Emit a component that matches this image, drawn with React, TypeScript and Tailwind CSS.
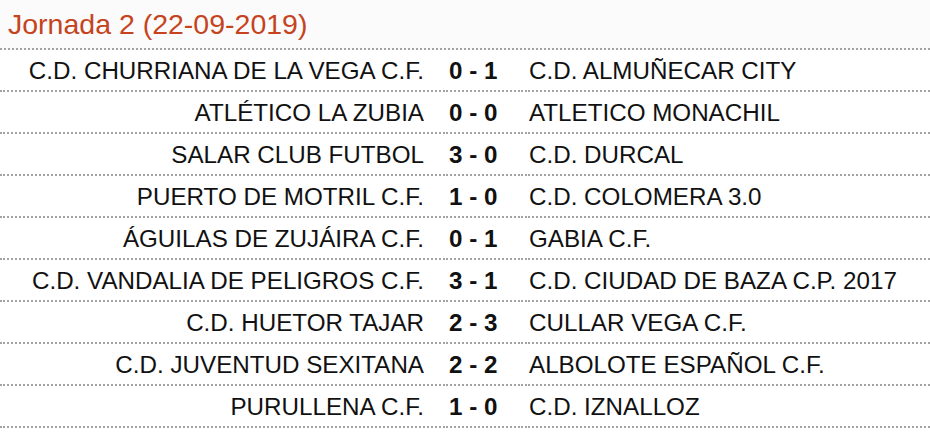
import React from "react";

const matches = [
    { home: "C.D. CHURRIANA DE LA VEGA C.F.", score: "0 - 1", away: "C.D. ALMUÑECAR CITY" },
    { home: "ATLÉTICO LA ZUBIA", score: "0 - 0", away: "ATLETICO MONACHIL" },
    { home: "SALAR CLUB FUTBOL", score: "3 - 0", away: "C.D. DURCAL" },
    { home: "PUERTO DE MOTRIL C.F.", score: "1 - 0", away: "C.D. COLOMERA 3.0" },
    { home: "ÁGUILAS DE ZUJÁIRA C.F.", score: "0 - 1", away: "GABIA C.F." },
    { home: "C.D. VANDALIA DE PELIGROS C.F.", score: "3 - 1", away: "C.D. CIUDAD DE BAZA C.P. 2017" },
    { home: "C.D. HUETOR TAJAR", score: "2 - 3", away: "CULLAR VEGA C.F." },
    { home: "C.D. JUVENTUD SEXITANA", score: "2 - 2", away: "ALBOLOTE ESPAÑOL C.F." },
    { home: "PURULLENA C.F.", score: "1 - 0", away: "C.D. IZNALLOZ" },
];

const dots = "border-b-2 border-dotted border-[#a3a3a3]";

export default function App() {
    return (
        <div className="w-[930px] h-[433px] bg-white font-['Liberation_Sans',Arial,sans-serif] overflow-hidden">
            <div className={"h-[50px] pt-[8px] pl-[8px] bg-[#fbfbfb] " + dots}>
                <h2 className="text-[28.5px] leading-[32px] text-[#c5441e]">Jornada 2 (22-09-2019)</h2>
            </div>
            {matches.map((m, i) => (
                <div key={i} className="flex h-[42px] text-[24.2px] text-[#111] gap-[2px]">
                    <div className={"w-[441px] flex items-center justify-end pr-[17px] pt-[2px] whitespace-nowrap " + dots}>
                        {m.home}
                    </div>
                    <div className={"w-[80px] flex items-center pl-[6px] pt-[2px] font-bold whitespace-nowrap " + dots}>
                        {m.score}
                    </div>
                    <div className={"flex-1 flex items-center pl-[4px] pt-[2px] whitespace-nowrap " + dots}>
                        {m.away}
                    </div>
                </div>
            ))}
        </div>
    );
}
